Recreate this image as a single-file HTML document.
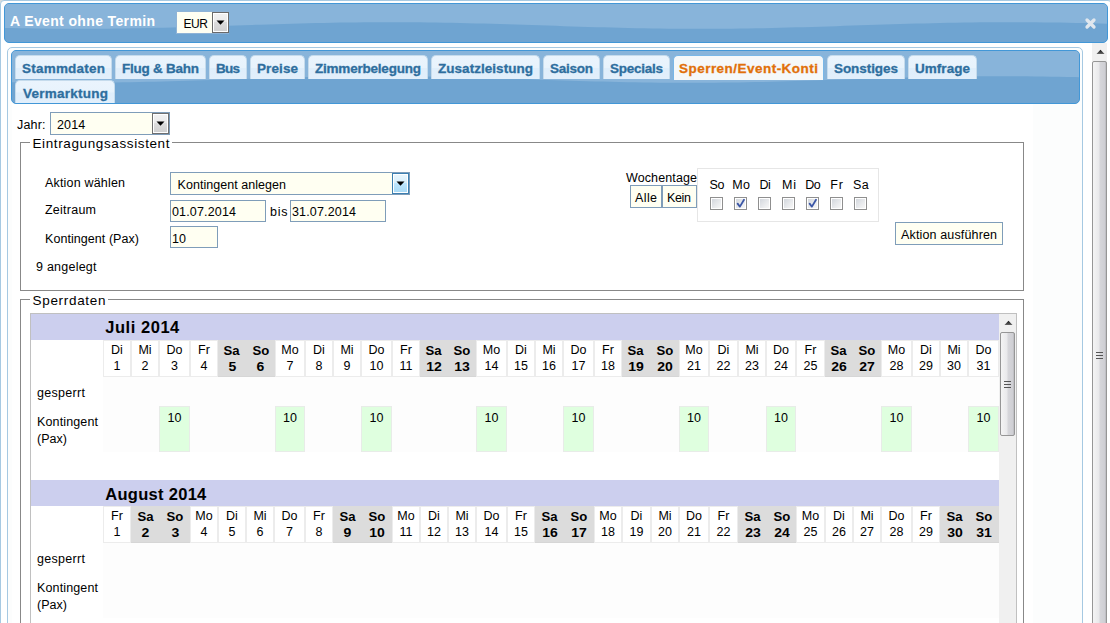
<!DOCTYPE html>
<html><head><meta charset="utf-8"><style>
html,body{margin:0;padding:0;width:1110px;height:623px;overflow:hidden;background:#dcdcdc}
body>div,body>svg,#root div,#root svg{position:absolute}
#root{position:absolute;left:0;top:0;width:1110px;height:623px;overflow:hidden}
</style></head><body><div id="root">
<div style="left:0px;top:0px;width:1110px;height:623px;background:#dcdcdc"></div>
<div style="left:0px;top:0px;width:1112px;height:660px;background:#fff;border:1px solid #a6c9e2;border-radius:4px;box-sizing:border-box"></div>
<div style="left:4px;top:3px;width:1104px;height:40px;border:1px solid #4297d7;border-radius:5px;box-sizing:border-box;overflow:hidden;background:#6fa4d1"><svg width="1104" height="40" style="position:absolute;left:-1px;top:-1px"><path d="M0 0 H1104 V20.70 L1104 20.70 L1096 20.48 L1088 20.28 L1080 20.09 L1072 19.91 L1064 19.75 L1056 19.61 L1048 19.49 L1040 19.39 L1032 19.31 L1024 19.25 L1016 19.22 L1008 19.20 L1000 19.21 L992 19.23 L984 19.28 L976 19.35 L968 19.44 L960 19.55 L952 19.68 L944 19.83 L936 20.00 L928 20.18 L920 20.38 L912 20.59 L904 20.81 L896 21.05 L888 21.29 L880 21.54 L872 21.80 L864 22.07 L856 22.33 L848 22.60 L840 22.87 L832 23.13 L824 23.39 L816 23.65 L808 23.89 L800 24.13 L792 24.36 L784 24.57 L776 24.77 L768 24.96 L760 25.13 L752 25.28 L744 25.42 L736 25.53 L728 25.63 L720 25.70 L712 25.76 L704 25.79 L696 25.80 L688 25.79 L680 25.76 L672 25.70 L664 25.63 L656 25.53 L648 25.42 L640 25.28 L632 25.13 L624 24.96 L616 24.77 L608 24.57 L600 24.36 L592 24.13 L584 23.89 L576 23.65 L568 23.39 L560 23.13 L552 22.87 L544 22.60 L536 22.33 L528 22.07 L520 21.80 L512 21.54 L504 21.29 L496 21.05 L488 20.81 L480 20.59 L472 20.38 L464 20.18 L456 20.00 L448 19.83 L440 19.68 L432 19.55 L424 19.44 L416 19.35 L408 19.28 L400 19.23 L392 19.21 L384 19.20 L376 19.22 L368 19.25 L360 19.31 L352 19.39 L344 19.49 L336 19.61 L328 19.75 L320 19.91 L312 20.09 L304 20.28 L296 20.48 L288 20.70 L280 20.93 L272 21.17 L264 21.42 L256 21.67 L248 21.93 L240 22.20 L232 22.47 L224 22.73 L216 23.00 L208 23.26 L200 23.52 L192 23.77 L184 24.01 L176 24.25 L168 24.47 L160 24.67 L152 24.87 L144 25.05 L136 25.21 L128 25.35 L120 25.48 L112 25.58 L104 25.67 L96 25.73 L88 25.78 L80 25.80 L72 25.80 L64 25.78 L56 25.73 L48 25.67 L40 25.58 L32 25.48 L24 25.35 L16 25.21 L8 25.05 L0 24.87 Z" fill="#88b4da"/></svg></div>
<div style="left:10.00px;top:14px;font:bold 14px/14px 'Liberation Sans', sans-serif;color:#fff;white-space:nowrap;letter-spacing:0.363px">A Event ohne Termin</div>
<div style="left:176px;top:11px;width:53px;height:23px;background:#fffff2;border:1px solid #8fb3d6;box-sizing:border-box"></div>
<div style="left:212px;top:12px;width:17px;height:21px;border:1px solid #6a6a6a;box-sizing:border-box;background:linear-gradient(#f2f2f2 0,#ebebeb 45%,#dcdcdc 50%,#d0d0d0 100%);box-shadow:inset 0 0 0 1px #fff"></div>
<svg style="left:216px;top:20px" width="9" height="6"><path d="M0.5 0.5 H8.5 L4.5 4.8 Z" fill="#000"/></svg>
<div style="left:183.50px;top:18px;font:normal 12px/12px 'Liberation Sans', sans-serif;color:#000;white-space:nowrap;letter-spacing:-0.422px">EUR</div>
<svg style="left:1084px;top:17px" width="13" height="13"><path d="M3 3 L10 10 M10 3 L3 10" stroke="#e0e7ee" stroke-width="3.3" stroke-linecap="round"/></svg>
<div style="left:1092px;top:43px;width:15px;height:600px;background:#f0f0f0"></div>
<svg style="left:1096px;top:49px" width="9" height="6"><defs><linearGradient id="ag" x1="0" y1="0" x2="0" y2="1"><stop offset="0" stop-color="#111"/><stop offset="1" stop-color="#666"/></linearGradient></defs><path d="M0.5 5 L4.5 0.8 L8.5 5 Z" fill="url(#ag)"/></svg>
<div style="left:1092px;top:61px;width:15px;height:600px;border:1px solid #969696;border-radius:2px;box-sizing:border-box;background:linear-gradient(90deg,#f4f4f4 0%,#e9e9eb 45%,#d6d6da 55%,#cfcfd4 90%,#b8b8bc 100%)"></div>
<div style="left:1096px;top:352px;width:7px;height:1px;background:#555"></div>
<div style="left:1096px;top:355px;width:7px;height:1px;background:#555"></div>
<div style="left:1096px;top:358px;width:7px;height:1px;background:#555"></div>
<div style="left:7px;top:47px;width:1076px;height:620px;border:1px solid #a6c9e2;border-radius:5px;box-sizing:border-box;background:#fcfdfd"></div>
<div style="left:12px;top:104px;width:1021px;height:560px;background:#fff"></div>
<div style="left:11px;top:50px;width:1069px;height:54px;border:1px solid #4297d7;border-radius:5px;box-sizing:border-box;overflow:hidden;background:#6fa4d1"><svg width="1069" height="54" style="position:absolute;left:-1px;top:-1px"><path d="M0 0 H1069 V27.23 L1069 27.23 L1064 27.11 L1056 26.93 L1048 26.77 L1040 26.63 L1032 26.51 L1024 26.41 L1016 26.32 L1008 26.26 L1000 26.22 L992 26.20 L984 26.20 L976 26.23 L968 26.27 L960 26.34 L952 26.43 L944 26.54 L936 26.66 L928 26.81 L920 26.97 L912 27.15 L904 27.35 L896 27.56 L888 27.78 L880 28.02 L872 28.26 L864 28.51 L856 28.77 L848 29.03 L840 29.30 L832 29.57 L824 29.83 L816 30.10 L808 30.36 L800 30.61 L792 30.86 L784 31.10 L776 31.33 L768 31.55 L760 31.75 L752 31.94 L744 32.11 L736 32.26 L728 32.40 L720 32.52 L712 32.62 L704 32.69 L696 32.75 L688 32.79 L680 32.80 L672 32.79 L664 32.76 L656 32.71 L648 32.64 L640 32.55 L632 32.43 L624 32.30 L616 32.15 L608 31.98 L600 31.80 L592 31.60 L584 31.39 L576 31.16 L568 30.92 L560 30.68 L552 30.42 L544 30.16 L536 29.90 L528 29.63 L520 29.37 L512 29.10 L504 28.84 L496 28.58 L488 28.32 L480 28.08 L472 27.84 L464 27.61 L456 27.40 L448 27.20 L440 27.02 L432 26.85 L424 26.70 L416 26.57 L408 26.45 L400 26.36 L392 26.29 L384 26.24 L376 26.21 L368 26.20 L360 26.21 L352 26.25 L344 26.31 L336 26.38 L328 26.48 L320 26.60 L312 26.74 L304 26.89 L296 27.06 L288 27.25 L280 27.45 L272 27.67 L264 27.90 L256 28.14 L248 28.39 L240 28.64 L232 28.90 L224 29.17 L216 29.43 L208 29.70 L200 29.97 L192 30.23 L184 30.49 L176 30.74 L168 30.98 L160 31.22 L152 31.44 L144 31.65 L136 31.85 L128 32.03 L120 32.19 L112 32.34 L104 32.46 L96 32.57 L88 32.66 L80 32.73 L72 32.77 L64 32.80 L56 32.80 L48 32.78 L40 32.74 L32 32.68 L24 32.59 L16 32.49 L8 32.37 L0 32.23 Z" fill="#88b4da"/></svg></div>
<div style="left:15px;top:55px;width:97px;height:24px;border:1px solid #c5dbec;border-bottom:0;box-sizing:border-box;border-radius:5px 5px 0 0;background:linear-gradient(#eaf4fd 0,#e8f3fc 50%,#dfeefb 54%,#e2effb 100%)"></div>
<div style="left:22.00px;top:62px;font:bold 13.5px/13.5px 'Liberation Sans', sans-serif;color:#2e6e9e;white-space:nowrap;letter-spacing:0.219px;-webkit-text-stroke:0.3px currentColor">Stammdaten</div>
<div style="left:115px;top:55px;width:91px;height:24px;border:1px solid #c5dbec;border-bottom:0;box-sizing:border-box;border-radius:5px 5px 0 0;background:linear-gradient(#eaf4fd 0,#e8f3fc 50%,#dfeefb 54%,#e2effb 100%)"></div>
<div style="left:122.00px;top:62px;font:bold 13.5px/13.5px 'Liberation Sans', sans-serif;color:#2e6e9e;white-space:nowrap;letter-spacing:-0.250px;-webkit-text-stroke:0.3px currentColor">Flug &amp; Bahn</div>
<div style="left:209px;top:55px;width:38px;height:24px;border:1px solid #c5dbec;border-bottom:0;box-sizing:border-box;border-radius:5px 5px 0 0;background:linear-gradient(#eaf4fd 0,#e8f3fc 50%,#dfeefb 54%,#e2effb 100%)"></div>
<div style="left:216.00px;top:62px;font:bold 13.5px/13.5px 'Liberation Sans', sans-serif;color:#2e6e9e;white-space:nowrap;letter-spacing:-0.758px;-webkit-text-stroke:0.3px currentColor">Bus</div>
<div style="left:250px;top:55px;width:55px;height:24px;border:1px solid #c5dbec;border-bottom:0;box-sizing:border-box;border-radius:5px 5px 0 0;background:linear-gradient(#eaf4fd 0,#e8f3fc 50%,#dfeefb 54%,#e2effb 100%)"></div>
<div style="left:257.00px;top:62px;font:bold 13.5px/13.5px 'Liberation Sans', sans-serif;color:#2e6e9e;white-space:nowrap;letter-spacing:0.091px;-webkit-text-stroke:0.3px currentColor">Preise</div>
<div style="left:308px;top:55px;width:120px;height:24px;border:1px solid #c5dbec;border-bottom:0;box-sizing:border-box;border-radius:5px 5px 0 0;background:linear-gradient(#eaf4fd 0,#e8f3fc 50%,#dfeefb 54%,#e2effb 100%)"></div>
<div style="left:315.00px;top:62px;font:bold 13.5px/13.5px 'Liberation Sans', sans-serif;color:#2e6e9e;white-space:nowrap;letter-spacing:-0.213px;-webkit-text-stroke:0.3px currentColor">Zimmerbelegung</div>
<div style="left:431px;top:55px;width:109px;height:24px;border:1px solid #c5dbec;border-bottom:0;box-sizing:border-box;border-radius:5px 5px 0 0;background:linear-gradient(#eaf4fd 0,#e8f3fc 50%,#dfeefb 54%,#e2effb 100%)"></div>
<div style="left:438.00px;top:62px;font:bold 13.5px/13.5px 'Liberation Sans', sans-serif;color:#2e6e9e;white-space:nowrap;letter-spacing:0.037px;-webkit-text-stroke:0.3px currentColor">Zusatzleistung</div>
<div style="left:543px;top:55px;width:57px;height:24px;border:1px solid #c5dbec;border-bottom:0;box-sizing:border-box;border-radius:5px 5px 0 0;background:linear-gradient(#eaf4fd 0,#e8f3fc 50%,#dfeefb 54%,#e2effb 100%)"></div>
<div style="left:550.00px;top:62px;font:bold 13.5px/13.5px 'Liberation Sans', sans-serif;color:#2e6e9e;white-space:nowrap;letter-spacing:-0.253px;-webkit-text-stroke:0.3px currentColor">Saison</div>
<div style="left:603px;top:55px;width:67px;height:24px;border:1px solid #c5dbec;border-bottom:0;box-sizing:border-box;border-radius:5px 5px 0 0;background:linear-gradient(#eaf4fd 0,#e8f3fc 50%,#dfeefb 54%,#e2effb 100%)"></div>
<div style="left:610.00px;top:62px;font:bold 13.5px/13.5px 'Liberation Sans', sans-serif;color:#2e6e9e;white-space:nowrap;letter-spacing:-0.257px;-webkit-text-stroke:0.3px currentColor">Specials</div>
<div style="left:673px;top:55px;width:151px;height:25px;border:1px solid #79b7e7;border-bottom:0;box-sizing:border-box;border-radius:5px 5px 0 0;background:#f5f8f9"></div>
<div style="left:679.00px;top:62px;font:bold 13.5px/13.5px 'Liberation Sans', sans-serif;color:#e17009;white-space:nowrap;letter-spacing:0.470px;-webkit-text-stroke:0.3px currentColor">Sperren/Event-Konti</div>
<div style="left:827px;top:55px;width:78px;height:24px;border:1px solid #c5dbec;border-bottom:0;box-sizing:border-box;border-radius:5px 5px 0 0;background:linear-gradient(#eaf4fd 0,#e8f3fc 50%,#dfeefb 54%,#e2effb 100%)"></div>
<div style="left:834.00px;top:62px;font:bold 13.5px/13.5px 'Liberation Sans', sans-serif;color:#2e6e9e;white-space:nowrap;letter-spacing:-0.064px;-webkit-text-stroke:0.3px currentColor">Sonstiges</div>
<div style="left:908px;top:55px;width:69px;height:24px;border:1px solid #c5dbec;border-bottom:0;box-sizing:border-box;border-radius:5px 5px 0 0;background:linear-gradient(#eaf4fd 0,#e8f3fc 50%,#dfeefb 54%,#e2effb 100%)"></div>
<div style="left:915.00px;top:62px;font:bold 13.5px/13.5px 'Liberation Sans', sans-serif;color:#2e6e9e;white-space:nowrap;letter-spacing:0.039px;-webkit-text-stroke:0.3px currentColor">Umfrage</div>
<div style="left:15px;top:80px;width:100px;height:23px;border:1px solid #c5dbec;border-bottom:0;box-sizing:border-box;border-radius:5px 5px 0 0;background:linear-gradient(#eaf4fd 0,#e8f3fc 50%,#dfeefb 54%,#e2effb 100%)"></div>
<div style="left:23.00px;top:87px;font:bold 13.5px/13.5px 'Liberation Sans', sans-serif;color:#2e6e9e;white-space:nowrap;letter-spacing:0.247px;-webkit-text-stroke:0.3px currentColor">Vermarktung</div>
<div style="left:17.00px;top:119px;font:normal 12.5px/12.5px 'Liberation Sans', sans-serif;color:#000;white-space:nowrap;letter-spacing:0.176px">Jahr:</div>
<div style="left:50px;top:112px;width:120px;height:23px;background:#fffff2;border:1px solid #7f9db9;box-sizing:border-box"></div>
<div style="left:152px;top:113px;width:17px;height:21px;border:1px solid #707070;box-sizing:border-box;background:linear-gradient(#f2f2f2 0,#ebebeb 45%,#dddddd 50%,#cfcfcf 100%);box-shadow:inset 0 0 0 1px #fff"></div>
<svg style="left:156px;top:121px" width="9" height="6"><path d="M0.5 0.5 H8.5 L4.5 4.8 Z" fill="#000"/></svg>
<div style="left:57.00px;top:119px;font:normal 12.5px/12.5px 'Liberation Sans', sans-serif;color:#000;white-space:nowrap;letter-spacing:0.163px">2014</div>
<div style="left:20px;top:142px;width:1px;height:149px;background:#888"></div>
<div style="left:1023px;top:142px;width:1px;height:149px;background:#888"></div>
<div style="left:20px;top:290px;width:1004px;height:1px;background:#888"></div>
<div style="left:20px;top:142px;width:10px;height:1px;background:#888"></div>
<div style="left:172px;top:142px;width:852px;height:1px;background:#888"></div>
<div style="left:32.50px;top:137px;font:normal 13.5px/13.5px 'Liberation Sans', sans-serif;color:#000;white-space:nowrap;letter-spacing:0.614px">Eintragungsassistent</div>
<div style="left:45.00px;top:177px;font:normal 12.5px/12.5px 'Liberation Sans', sans-serif;color:#000;white-space:nowrap;letter-spacing:0.181px">Aktion wählen</div>
<div style="left:170px;top:172px;width:240px;height:23px;background:#fffff2;border:1px solid #7f9db9;box-sizing:border-box"></div>
<div style="left:392px;top:173px;width:17px;height:21px;border:1px solid #3c7fb1;box-sizing:border-box;background:linear-gradient(#eaf6fd 0,#d9f0fc 45%,#bee6fd 50%,#a7d9f5 100%);box-shadow:inset 0 0 0 1px #fff"></div>
<svg style="left:396px;top:181px" width="9" height="6"><path d="M0.5 0.5 H8.5 L4.5 4.8 Z" fill="#000"/></svg>
<div style="left:177.50px;top:179px;font:normal 12.5px/12.5px 'Liberation Sans', sans-serif;color:#000;white-space:nowrap;letter-spacing:0.045px">Kontingent anlegen</div>
<div style="left:45.00px;top:204px;font:normal 12.5px/12.5px 'Liberation Sans', sans-serif;color:#000;white-space:nowrap;letter-spacing:0.239px">Zeitraum</div>
<div style="left:170px;top:200px;width:96px;height:22px;background:#fffff2;border:1px solid #7f9db9;box-sizing:border-box"></div>
<div style="left:172.00px;top:206px;font:normal 12.5px/12.5px 'Liberation Sans', sans-serif;color:#000;white-space:nowrap;letter-spacing:0.160px">01.07.2014</div>
<div style="left:270.00px;top:206px;font:normal 12.5px/12.5px 'Liberation Sans', sans-serif;color:#000;white-space:nowrap;letter-spacing:0.758px">bis</div>
<div style="left:290px;top:200px;width:96px;height:22px;background:#fffff2;border:1px solid #7f9db9;box-sizing:border-box"></div>
<div style="left:292.00px;top:206px;font:normal 12.5px/12.5px 'Liberation Sans', sans-serif;color:#000;white-space:nowrap;letter-spacing:0.160px">31.07.2014</div>
<div style="left:45.00px;top:233px;font:normal 12.5px/12.5px 'Liberation Sans', sans-serif;color:#000;white-space:nowrap;letter-spacing:0.059px">Kontingent (Pax)</div>
<div style="left:170px;top:226px;width:48px;height:22px;background:#fffff2;border:1px solid #7f9db9;box-sizing:border-box"></div>
<div style="left:172.00px;top:233px;font:normal 12.5px/12.5px 'Liberation Sans', sans-serif;color:#000;white-space:nowrap;letter-spacing:0.094px">10</div>
<div style="left:36.00px;top:261px;font:normal 12.5px/12.5px 'Liberation Sans', sans-serif;color:#000;white-space:nowrap;letter-spacing:0.234px">9 angelegt</div>
<div style="left:626.00px;top:172px;font:normal 12.5px/12.5px 'Liberation Sans', sans-serif;color:#000;white-space:nowrap;letter-spacing:0.115px">Wochentage</div>
<div style="left:630px;top:185px;width:32px;height:23px;background:#fffff2;border:1px solid #7f9db9;box-sizing:border-box"></div>
<div style="left:662px;top:185px;width:35px;height:23px;background:#fffff2;border:1px solid #7f9db9;box-sizing:border-box"></div>
<div style="left:635.00px;top:192px;font:normal 12.5px/12.5px 'Liberation Sans', sans-serif;color:#000;white-space:nowrap;letter-spacing:0.385px">Alle</div>
<div style="left:667.00px;top:192px;font:normal 12.5px/12.5px 'Liberation Sans', sans-serif;color:#000;white-space:nowrap;letter-spacing:-0.344px">Kein</div>
<div style="left:697px;top:168px;width:182px;height:54px;border:1px solid #e6e6e6;box-sizing:border-box;background:#fff"></div>
<div style="left:709.50px;top:179px;font:normal 12.5px/12.5px 'Liberation Sans', sans-serif;color:#000;white-space:nowrap;letter-spacing:-0.297px">So</div>
<div style="left:710px;top:197px;width:13px;height:13px;border:1px solid #8f8f8f;box-sizing:border-box;background:#fff"></div>
<div style="left:712px;top:199px;width:9px;height:9px;background:linear-gradient(135deg,#d3d7dd 0%,#e6e8eb 50%,#f7f7f7 100%)"></div>
<div style="left:732.30px;top:179px;font:normal 12.5px/12.5px 'Liberation Sans', sans-serif;color:#000;white-space:nowrap;letter-spacing:0.225px">Mo</div>
<div style="left:734px;top:197px;width:13px;height:13px;border:1px solid #8f8f8f;box-sizing:border-box;background:#fff"></div>
<div style="left:736px;top:199px;width:9px;height:9px;background:linear-gradient(135deg,#d3d7dd 0%,#e6e8eb 50%,#f7f7f7 100%)"></div>
<svg style="left:734px;top:197px" width="13" height="13"><path d="M3.6 6.6 L5.9 9.6 L10 2.8" stroke="#3b56a6" stroke-width="1.8" fill="none" stroke-linecap="round" stroke-linejoin="round"/></svg>
<div style="left:759.40px;top:179px;font:normal 12.5px/12.5px 'Liberation Sans', sans-serif;color:#000;white-space:nowrap;letter-spacing:-0.412px">Di</div>
<div style="left:758px;top:197px;width:13px;height:13px;border:1px solid #8f8f8f;box-sizing:border-box;background:#fff"></div>
<div style="left:760px;top:199px;width:9px;height:9px;background:linear-gradient(135deg,#d3d7dd 0%,#e6e8eb 50%,#f7f7f7 100%)"></div>
<div style="left:782.00px;top:179px;font:normal 12.5px/12.5px 'Liberation Sans', sans-serif;color:#000;white-space:nowrap;letter-spacing:0.797px">Mi</div>
<div style="left:782px;top:197px;width:13px;height:13px;border:1px solid #8f8f8f;box-sizing:border-box;background:#fff"></div>
<div style="left:784px;top:199px;width:9px;height:9px;background:linear-gradient(135deg,#d3d7dd 0%,#e6e8eb 50%,#f7f7f7 100%)"></div>
<div style="left:805.30px;top:179px;font:normal 12.5px/12.5px 'Liberation Sans', sans-serif;color:#000;white-space:nowrap;letter-spacing:-0.584px">Do</div>
<div style="left:806px;top:197px;width:13px;height:13px;border:1px solid #8f8f8f;box-sizing:border-box;background:#fff"></div>
<div style="left:808px;top:199px;width:9px;height:9px;background:linear-gradient(135deg,#d3d7dd 0%,#e6e8eb 50%,#f7f7f7 100%)"></div>
<svg style="left:806px;top:197px" width="13" height="13"><path d="M3.6 6.6 L5.9 9.6 L10 2.8" stroke="#3b56a6" stroke-width="1.8" fill="none" stroke-linecap="round" stroke-linejoin="round"/></svg>
<div style="left:830.20px;top:179px;font:normal 12.5px/12.5px 'Liberation Sans', sans-serif;color:#000;white-space:nowrap;letter-spacing:0.887px">Fr</div>
<div style="left:830px;top:197px;width:13px;height:13px;border:1px solid #8f8f8f;box-sizing:border-box;background:#fff"></div>
<div style="left:832px;top:199px;width:9px;height:9px;background:linear-gradient(135deg,#d3d7dd 0%,#e6e8eb 50%,#f7f7f7 100%)"></div>
<div style="left:853.00px;top:179px;font:normal 12.5px/12.5px 'Liberation Sans', sans-serif;color:#000;white-space:nowrap;letter-spacing:0.503px">Sa</div>
<div style="left:854px;top:197px;width:13px;height:13px;border:1px solid #8f8f8f;box-sizing:border-box;background:#fff"></div>
<div style="left:856px;top:199px;width:9px;height:9px;background:linear-gradient(135deg,#d3d7dd 0%,#e6e8eb 50%,#f7f7f7 100%)"></div>
<div style="left:895px;top:222px;width:108px;height:23px;background:#fffff2;border:1px solid #7f9db9;box-sizing:border-box"></div>
<div style="left:901.00px;top:229px;font:normal 12.5px/12.5px 'Liberation Sans', sans-serif;color:#000;white-space:nowrap;letter-spacing:0.146px">Aktion ausführen</div>
<div style="left:20px;top:299px;width:1px;height:400px;background:#888"></div>
<div style="left:1023px;top:299px;width:1px;height:400px;background:#888"></div>
<div style="left:20px;top:299px;width:10px;height:1px;background:#888"></div>
<div style="left:108px;top:299px;width:916px;height:1px;background:#888"></div>
<div style="left:32.50px;top:294px;font:normal 13.5px/13.5px 'Liberation Sans', sans-serif;color:#000;white-space:nowrap;letter-spacing:0.689px">Sperrdaten</div>
<div style="left:30px;top:313px;width:987px;height:400px;border:1px solid #c0c0c0;box-sizing:border-box;background:#fff"></div>
<div style="left:999px;top:314px;width:17px;height:400px;background:#f0f0f0"></div>
<svg style="left:1004px;top:320px" width="9" height="6"><defs><linearGradient id="ag" x1="0" y1="0" x2="0" y2="1"><stop offset="0" stop-color="#111"/><stop offset="1" stop-color="#666"/></linearGradient></defs><path d="M0.5 5 L4.5 0.8 L8.5 5 Z" fill="url(#ag)"/></svg>
<div style="left:1000px;top:332px;width:15px;height:104px;border:1px solid #969696;border-radius:2px;box-sizing:border-box;background:linear-gradient(90deg,#f4f4f4 0%,#e9e9eb 45%,#d6d6da 55%,#cfcfd4 90%,#b8b8bc 100%)"></div>
<div style="left:1004px;top:381px;width:7px;height:1px;background:#555"></div>
<div style="left:1004px;top:384px;width:7px;height:1px;background:#555"></div>
<div style="left:1004px;top:387px;width:7px;height:1px;background:#555"></div>
<div style="left:31px;top:314px;width:968px;height:26px;background:#cccfee"></div>
<div style="left:105.30px;top:319px;font:bold 16.5px/16.5px 'Liberation Sans', sans-serif;color:#000;white-space:nowrap;letter-spacing:0.535px">Juli 2014</div>
<div style="left:103px;top:377px;width:896px;height:75px;background:#fdfdfd"></div>
<div style="left:103px;top:340px;width:28px;height:37px;border:1px solid #ececec;box-sizing:border-box;background:#fff"></div>
<div style="left:111.09px;top:344px;font:normal 12.5px/12.5px 'Liberation Sans', sans-serif;color:#000;white-space:nowrap">Di</div>
<div style="left:113.52px;top:360px;font:normal 12.5px/12.5px 'Liberation Sans', sans-serif;color:#000;white-space:nowrap">1</div>
<div style="left:131px;top:340px;width:28px;height:37px;border:1px solid #ececec;box-sizing:border-box;background:#fff"></div>
<div style="left:138.40px;top:344px;font:normal 12.5px/12.5px 'Liberation Sans', sans-serif;color:#000;white-space:nowrap">Mi</div>
<div style="left:141.52px;top:360px;font:normal 12.5px/12.5px 'Liberation Sans', sans-serif;color:#000;white-space:nowrap">2</div>
<div style="left:159px;top:340px;width:31px;height:37px;border:1px solid #ececec;box-sizing:border-box;background:#fff"></div>
<div style="left:166.51px;top:344px;font:normal 12.5px/12.5px 'Liberation Sans', sans-serif;color:#000;white-space:nowrap">Do</div>
<div style="left:171.02px;top:360px;font:normal 12.5px/12.5px 'Liberation Sans', sans-serif;color:#000;white-space:nowrap">3</div>
<div style="left:159px;top:406px;width:31px;height:46px;border:1px solid #e8ece8;box-sizing:border-box;background:#dfffdf"></div>
<div style="left:167.55px;top:412px;font:normal 12.5px/12.5px 'Liberation Sans', sans-serif;color:#000;white-space:nowrap">10</div>
<div style="left:190px;top:340px;width:28px;height:37px;border:1px solid #ececec;box-sizing:border-box;background:#fff"></div>
<div style="left:198.09px;top:344px;font:normal 12.5px/12.5px 'Liberation Sans', sans-serif;color:#000;white-space:nowrap">Fr</div>
<div style="left:200.52px;top:360px;font:normal 12.5px/12.5px 'Liberation Sans', sans-serif;color:#000;white-space:nowrap">4</div>
<div style="left:218px;top:340px;width:28px;height:37px;background:#dcdcdc;box-shadow:inset 0 -1px 0 #d6d6d6"></div>
<div style="left:224.35px;top:345px;font:bold 12.5px/12.5px 'Liberation Sans', sans-serif;color:#000;white-space:nowrap;transform:scaleX(1.05);transform-origin:50% 50%">Sa</div>
<div style="left:228.52px;top:361px;font:bold 12.5px/12.5px 'Liberation Sans', sans-serif;color:#000;white-space:nowrap;transform:scaleX(1.12);transform-origin:50% 50%">5</div>
<div style="left:246px;top:340px;width:29px;height:37px;background:#dcdcdc;box-shadow:inset 0 -1px 0 #d6d6d6"></div>
<div style="left:252.51px;top:345px;font:bold 12.5px/12.5px 'Liberation Sans', sans-serif;color:#000;white-space:nowrap;transform:scaleX(1.05);transform-origin:50% 50%">So</div>
<div style="left:257.02px;top:361px;font:bold 12.5px/12.5px 'Liberation Sans', sans-serif;color:#000;white-space:nowrap;transform:scaleX(1.12);transform-origin:50% 50%">6</div>
<div style="left:275px;top:340px;width:30px;height:37px;border:1px solid #ececec;box-sizing:border-box;background:#fff"></div>
<div style="left:281.31px;top:344px;font:normal 12.5px/12.5px 'Liberation Sans', sans-serif;color:#000;white-space:nowrap">Mo</div>
<div style="left:286.52px;top:360px;font:normal 12.5px/12.5px 'Liberation Sans', sans-serif;color:#000;white-space:nowrap">7</div>
<div style="left:275px;top:406px;width:30px;height:46px;border:1px solid #e8ece8;box-sizing:border-box;background:#dfffdf"></div>
<div style="left:283.05px;top:412px;font:normal 12.5px/12.5px 'Liberation Sans', sans-serif;color:#000;white-space:nowrap">10</div>
<div style="left:305px;top:340px;width:28px;height:37px;border:1px solid #ececec;box-sizing:border-box;background:#fff"></div>
<div style="left:313.09px;top:344px;font:normal 12.5px/12.5px 'Liberation Sans', sans-serif;color:#000;white-space:nowrap">Di</div>
<div style="left:315.52px;top:360px;font:normal 12.5px/12.5px 'Liberation Sans', sans-serif;color:#000;white-space:nowrap">8</div>
<div style="left:333px;top:340px;width:28px;height:37px;border:1px solid #ececec;box-sizing:border-box;background:#fff"></div>
<div style="left:340.40px;top:344px;font:normal 12.5px/12.5px 'Liberation Sans', sans-serif;color:#000;white-space:nowrap">Mi</div>
<div style="left:343.52px;top:360px;font:normal 12.5px/12.5px 'Liberation Sans', sans-serif;color:#000;white-space:nowrap">9</div>
<div style="left:361px;top:340px;width:31px;height:37px;border:1px solid #ececec;box-sizing:border-box;background:#fff"></div>
<div style="left:368.51px;top:344px;font:normal 12.5px/12.5px 'Liberation Sans', sans-serif;color:#000;white-space:nowrap">Do</div>
<div style="left:369.55px;top:360px;font:normal 12.5px/12.5px 'Liberation Sans', sans-serif;color:#000;white-space:nowrap">10</div>
<div style="left:361px;top:406px;width:31px;height:46px;border:1px solid #e8ece8;box-sizing:border-box;background:#dfffdf"></div>
<div style="left:369.55px;top:412px;font:normal 12.5px/12.5px 'Liberation Sans', sans-serif;color:#000;white-space:nowrap">10</div>
<div style="left:392px;top:340px;width:28px;height:37px;border:1px solid #ececec;box-sizing:border-box;background:#fff"></div>
<div style="left:400.09px;top:344px;font:normal 12.5px/12.5px 'Liberation Sans', sans-serif;color:#000;white-space:nowrap">Fr</div>
<div style="left:399.51px;top:360px;font:normal 12.5px/12.5px 'Liberation Sans', sans-serif;color:#000;white-space:nowrap">11</div>
<div style="left:420px;top:340px;width:28px;height:37px;background:#dcdcdc;box-shadow:inset 0 -1px 0 #d6d6d6"></div>
<div style="left:426.35px;top:345px;font:bold 12.5px/12.5px 'Liberation Sans', sans-serif;color:#000;white-space:nowrap;transform:scaleX(1.05);transform-origin:50% 50%">Sa</div>
<div style="left:427.05px;top:361px;font:bold 12.5px/12.5px 'Liberation Sans', sans-serif;color:#000;white-space:nowrap;transform:scaleX(1.12);transform-origin:50% 50%">12</div>
<div style="left:448px;top:340px;width:28px;height:37px;background:#dcdcdc;box-shadow:inset 0 -1px 0 #d6d6d6"></div>
<div style="left:454.01px;top:345px;font:bold 12.5px/12.5px 'Liberation Sans', sans-serif;color:#000;white-space:nowrap;transform:scaleX(1.05);transform-origin:50% 50%">So</div>
<div style="left:455.05px;top:361px;font:bold 12.5px/12.5px 'Liberation Sans', sans-serif;color:#000;white-space:nowrap;transform:scaleX(1.12);transform-origin:50% 50%">13</div>
<div style="left:476px;top:340px;width:31px;height:37px;border:1px solid #ececec;box-sizing:border-box;background:#fff"></div>
<div style="left:482.81px;top:344px;font:normal 12.5px/12.5px 'Liberation Sans', sans-serif;color:#000;white-space:nowrap">Mo</div>
<div style="left:484.55px;top:360px;font:normal 12.5px/12.5px 'Liberation Sans', sans-serif;color:#000;white-space:nowrap">14</div>
<div style="left:476px;top:406px;width:31px;height:46px;border:1px solid #e8ece8;box-sizing:border-box;background:#dfffdf"></div>
<div style="left:484.55px;top:412px;font:normal 12.5px/12.5px 'Liberation Sans', sans-serif;color:#000;white-space:nowrap">10</div>
<div style="left:507px;top:340px;width:28px;height:37px;border:1px solid #ececec;box-sizing:border-box;background:#fff"></div>
<div style="left:515.09px;top:344px;font:normal 12.5px/12.5px 'Liberation Sans', sans-serif;color:#000;white-space:nowrap">Di</div>
<div style="left:514.05px;top:360px;font:normal 12.5px/12.5px 'Liberation Sans', sans-serif;color:#000;white-space:nowrap">15</div>
<div style="left:535px;top:340px;width:28px;height:37px;border:1px solid #ececec;box-sizing:border-box;background:#fff"></div>
<div style="left:542.40px;top:344px;font:normal 12.5px/12.5px 'Liberation Sans', sans-serif;color:#000;white-space:nowrap">Mi</div>
<div style="left:542.05px;top:360px;font:normal 12.5px/12.5px 'Liberation Sans', sans-serif;color:#000;white-space:nowrap">16</div>
<div style="left:563px;top:340px;width:31px;height:37px;border:1px solid #ececec;box-sizing:border-box;background:#fff"></div>
<div style="left:570.51px;top:344px;font:normal 12.5px/12.5px 'Liberation Sans', sans-serif;color:#000;white-space:nowrap">Do</div>
<div style="left:571.55px;top:360px;font:normal 12.5px/12.5px 'Liberation Sans', sans-serif;color:#000;white-space:nowrap">17</div>
<div style="left:563px;top:406px;width:31px;height:46px;border:1px solid #e8ece8;box-sizing:border-box;background:#dfffdf"></div>
<div style="left:571.55px;top:412px;font:normal 12.5px/12.5px 'Liberation Sans', sans-serif;color:#000;white-space:nowrap">10</div>
<div style="left:594px;top:340px;width:28px;height:37px;border:1px solid #ececec;box-sizing:border-box;background:#fff"></div>
<div style="left:602.09px;top:344px;font:normal 12.5px/12.5px 'Liberation Sans', sans-serif;color:#000;white-space:nowrap">Fr</div>
<div style="left:601.05px;top:360px;font:normal 12.5px/12.5px 'Liberation Sans', sans-serif;color:#000;white-space:nowrap">18</div>
<div style="left:622px;top:340px;width:28px;height:37px;background:#dcdcdc;box-shadow:inset 0 -1px 0 #d6d6d6"></div>
<div style="left:628.35px;top:345px;font:bold 12.5px/12.5px 'Liberation Sans', sans-serif;color:#000;white-space:nowrap;transform:scaleX(1.05);transform-origin:50% 50%">Sa</div>
<div style="left:629.05px;top:361px;font:bold 12.5px/12.5px 'Liberation Sans', sans-serif;color:#000;white-space:nowrap;transform:scaleX(1.12);transform-origin:50% 50%">19</div>
<div style="left:650px;top:340px;width:29px;height:37px;background:#dcdcdc;box-shadow:inset 0 -1px 0 #d6d6d6"></div>
<div style="left:656.51px;top:345px;font:bold 12.5px/12.5px 'Liberation Sans', sans-serif;color:#000;white-space:nowrap;transform:scaleX(1.05);transform-origin:50% 50%">So</div>
<div style="left:657.55px;top:361px;font:bold 12.5px/12.5px 'Liberation Sans', sans-serif;color:#000;white-space:nowrap;transform:scaleX(1.12);transform-origin:50% 50%">20</div>
<div style="left:679px;top:340px;width:30px;height:37px;border:1px solid #ececec;box-sizing:border-box;background:#fff"></div>
<div style="left:685.31px;top:344px;font:normal 12.5px/12.5px 'Liberation Sans', sans-serif;color:#000;white-space:nowrap">Mo</div>
<div style="left:687.05px;top:360px;font:normal 12.5px/12.5px 'Liberation Sans', sans-serif;color:#000;white-space:nowrap">21</div>
<div style="left:679px;top:406px;width:30px;height:46px;border:1px solid #e8ece8;box-sizing:border-box;background:#dfffdf"></div>
<div style="left:687.05px;top:412px;font:normal 12.5px/12.5px 'Liberation Sans', sans-serif;color:#000;white-space:nowrap">10</div>
<div style="left:709px;top:340px;width:29px;height:37px;border:1px solid #ececec;box-sizing:border-box;background:#fff"></div>
<div style="left:717.59px;top:344px;font:normal 12.5px/12.5px 'Liberation Sans', sans-serif;color:#000;white-space:nowrap">Di</div>
<div style="left:716.55px;top:360px;font:normal 12.5px/12.5px 'Liberation Sans', sans-serif;color:#000;white-space:nowrap">22</div>
<div style="left:738px;top:340px;width:28px;height:37px;border:1px solid #ececec;box-sizing:border-box;background:#fff"></div>
<div style="left:745.40px;top:344px;font:normal 12.5px/12.5px 'Liberation Sans', sans-serif;color:#000;white-space:nowrap">Mi</div>
<div style="left:745.05px;top:360px;font:normal 12.5px/12.5px 'Liberation Sans', sans-serif;color:#000;white-space:nowrap">23</div>
<div style="left:766px;top:340px;width:30px;height:37px;border:1px solid #ececec;box-sizing:border-box;background:#fff"></div>
<div style="left:773.01px;top:344px;font:normal 12.5px/12.5px 'Liberation Sans', sans-serif;color:#000;white-space:nowrap">Do</div>
<div style="left:774.05px;top:360px;font:normal 12.5px/12.5px 'Liberation Sans', sans-serif;color:#000;white-space:nowrap">24</div>
<div style="left:766px;top:406px;width:30px;height:46px;border:1px solid #e8ece8;box-sizing:border-box;background:#dfffdf"></div>
<div style="left:774.05px;top:412px;font:normal 12.5px/12.5px 'Liberation Sans', sans-serif;color:#000;white-space:nowrap">10</div>
<div style="left:796px;top:340px;width:29px;height:37px;border:1px solid #ececec;box-sizing:border-box;background:#fff"></div>
<div style="left:804.59px;top:344px;font:normal 12.5px/12.5px 'Liberation Sans', sans-serif;color:#000;white-space:nowrap">Fr</div>
<div style="left:803.55px;top:360px;font:normal 12.5px/12.5px 'Liberation Sans', sans-serif;color:#000;white-space:nowrap">25</div>
<div style="left:825px;top:340px;width:28px;height:37px;background:#dcdcdc;box-shadow:inset 0 -1px 0 #d6d6d6"></div>
<div style="left:831.35px;top:345px;font:bold 12.5px/12.5px 'Liberation Sans', sans-serif;color:#000;white-space:nowrap;transform:scaleX(1.05);transform-origin:50% 50%">Sa</div>
<div style="left:832.05px;top:361px;font:bold 12.5px/12.5px 'Liberation Sans', sans-serif;color:#000;white-space:nowrap;transform:scaleX(1.12);transform-origin:50% 50%">26</div>
<div style="left:853px;top:340px;width:28px;height:37px;background:#dcdcdc;box-shadow:inset 0 -1px 0 #d6d6d6"></div>
<div style="left:859.01px;top:345px;font:bold 12.5px/12.5px 'Liberation Sans', sans-serif;color:#000;white-space:nowrap;transform:scaleX(1.05);transform-origin:50% 50%">So</div>
<div style="left:860.05px;top:361px;font:bold 12.5px/12.5px 'Liberation Sans', sans-serif;color:#000;white-space:nowrap;transform:scaleX(1.12);transform-origin:50% 50%">27</div>
<div style="left:881px;top:340px;width:31px;height:37px;border:1px solid #ececec;box-sizing:border-box;background:#fff"></div>
<div style="left:887.81px;top:344px;font:normal 12.5px/12.5px 'Liberation Sans', sans-serif;color:#000;white-space:nowrap">Mo</div>
<div style="left:889.55px;top:360px;font:normal 12.5px/12.5px 'Liberation Sans', sans-serif;color:#000;white-space:nowrap">28</div>
<div style="left:881px;top:406px;width:31px;height:46px;border:1px solid #e8ece8;box-sizing:border-box;background:#dfffdf"></div>
<div style="left:889.55px;top:412px;font:normal 12.5px/12.5px 'Liberation Sans', sans-serif;color:#000;white-space:nowrap">10</div>
<div style="left:912px;top:340px;width:28px;height:37px;border:1px solid #ececec;box-sizing:border-box;background:#fff"></div>
<div style="left:920.09px;top:344px;font:normal 12.5px/12.5px 'Liberation Sans', sans-serif;color:#000;white-space:nowrap">Di</div>
<div style="left:919.05px;top:360px;font:normal 12.5px/12.5px 'Liberation Sans', sans-serif;color:#000;white-space:nowrap">29</div>
<div style="left:940px;top:340px;width:28px;height:37px;border:1px solid #ececec;box-sizing:border-box;background:#fff"></div>
<div style="left:947.40px;top:344px;font:normal 12.5px/12.5px 'Liberation Sans', sans-serif;color:#000;white-space:nowrap">Mi</div>
<div style="left:947.05px;top:360px;font:normal 12.5px/12.5px 'Liberation Sans', sans-serif;color:#000;white-space:nowrap">30</div>
<div style="left:968px;top:340px;width:31px;height:37px;border:1px solid #ececec;box-sizing:border-box;background:#fff"></div>
<div style="left:975.51px;top:344px;font:normal 12.5px/12.5px 'Liberation Sans', sans-serif;color:#000;white-space:nowrap">Do</div>
<div style="left:976.55px;top:360px;font:normal 12.5px/12.5px 'Liberation Sans', sans-serif;color:#000;white-space:nowrap">31</div>
<div style="left:968px;top:406px;width:31px;height:46px;border:1px solid #e8ece8;box-sizing:border-box;background:#dfffdf"></div>
<div style="left:976.55px;top:412px;font:normal 12.5px/12.5px 'Liberation Sans', sans-serif;color:#000;white-space:nowrap">10</div>
<div style="left:37.00px;top:387px;font:normal 12.5px/12.5px 'Liberation Sans', sans-serif;color:#000;white-space:nowrap;letter-spacing:0.306px">gesperrt</div>
<div style="left:37.00px;top:416px;font:normal 12.5px/12.5px 'Liberation Sans', sans-serif;color:#000;white-space:nowrap;letter-spacing:0.135px">Kontingent</div>
<div style="left:37.00px;top:433px;font:normal 12.5px/12.5px 'Liberation Sans', sans-serif;color:#000;white-space:nowrap;letter-spacing:0.031px">(Pax)</div>
<div style="left:31px;top:480px;width:968px;height:26px;background:#cccfee"></div>
<div style="left:105.30px;top:486px;font:bold 16.5px/16.5px 'Liberation Sans', sans-serif;color:#000;white-space:nowrap;letter-spacing:0.287px">August 2014</div>
<div style="left:103px;top:543px;width:896px;height:75px;background:#fdfdfd"></div>
<div style="left:103px;top:506px;width:28px;height:37px;border:1px solid #ececec;box-sizing:border-box;background:#fff"></div>
<div style="left:111.09px;top:510px;font:normal 12.5px/12.5px 'Liberation Sans', sans-serif;color:#000;white-space:nowrap">Fr</div>
<div style="left:113.52px;top:526px;font:normal 12.5px/12.5px 'Liberation Sans', sans-serif;color:#000;white-space:nowrap">1</div>
<div style="left:131px;top:506px;width:29px;height:37px;background:#dcdcdc;box-shadow:inset 0 -1px 0 #d6d6d6"></div>
<div style="left:137.85px;top:511px;font:bold 12.5px/12.5px 'Liberation Sans', sans-serif;color:#000;white-space:nowrap;transform:scaleX(1.05);transform-origin:50% 50%">Sa</div>
<div style="left:142.02px;top:527px;font:bold 12.5px/12.5px 'Liberation Sans', sans-serif;color:#000;white-space:nowrap;transform:scaleX(1.12);transform-origin:50% 50%">2</div>
<div style="left:160px;top:506px;width:30px;height:37px;background:#dcdcdc;box-shadow:inset 0 -1px 0 #d6d6d6"></div>
<div style="left:167.01px;top:511px;font:bold 12.5px/12.5px 'Liberation Sans', sans-serif;color:#000;white-space:nowrap;transform:scaleX(1.05);transform-origin:50% 50%">So</div>
<div style="left:171.52px;top:527px;font:bold 12.5px/12.5px 'Liberation Sans', sans-serif;color:#000;white-space:nowrap;transform:scaleX(1.12);transform-origin:50% 50%">3</div>
<div style="left:190px;top:506px;width:28px;height:37px;border:1px solid #ececec;box-sizing:border-box;background:#fff"></div>
<div style="left:195.31px;top:510px;font:normal 12.5px/12.5px 'Liberation Sans', sans-serif;color:#000;white-space:nowrap">Mo</div>
<div style="left:200.52px;top:526px;font:normal 12.5px/12.5px 'Liberation Sans', sans-serif;color:#000;white-space:nowrap">4</div>
<div style="left:218px;top:506px;width:28px;height:37px;border:1px solid #ececec;box-sizing:border-box;background:#fff"></div>
<div style="left:226.09px;top:510px;font:normal 12.5px/12.5px 'Liberation Sans', sans-serif;color:#000;white-space:nowrap">Di</div>
<div style="left:228.52px;top:526px;font:normal 12.5px/12.5px 'Liberation Sans', sans-serif;color:#000;white-space:nowrap">5</div>
<div style="left:246px;top:506px;width:28px;height:37px;border:1px solid #ececec;box-sizing:border-box;background:#fff"></div>
<div style="left:253.40px;top:510px;font:normal 12.5px/12.5px 'Liberation Sans', sans-serif;color:#000;white-space:nowrap">Mi</div>
<div style="left:256.52px;top:526px;font:normal 12.5px/12.5px 'Liberation Sans', sans-serif;color:#000;white-space:nowrap">6</div>
<div style="left:274px;top:506px;width:31px;height:37px;border:1px solid #ececec;box-sizing:border-box;background:#fff"></div>
<div style="left:281.51px;top:510px;font:normal 12.5px/12.5px 'Liberation Sans', sans-serif;color:#000;white-space:nowrap">Do</div>
<div style="left:286.02px;top:526px;font:normal 12.5px/12.5px 'Liberation Sans', sans-serif;color:#000;white-space:nowrap">7</div>
<div style="left:305px;top:506px;width:28px;height:37px;border:1px solid #ececec;box-sizing:border-box;background:#fff"></div>
<div style="left:313.09px;top:510px;font:normal 12.5px/12.5px 'Liberation Sans', sans-serif;color:#000;white-space:nowrap">Fr</div>
<div style="left:315.52px;top:526px;font:normal 12.5px/12.5px 'Liberation Sans', sans-serif;color:#000;white-space:nowrap">8</div>
<div style="left:333px;top:506px;width:29px;height:37px;background:#dcdcdc;box-shadow:inset 0 -1px 0 #d6d6d6"></div>
<div style="left:339.85px;top:511px;font:bold 12.5px/12.5px 'Liberation Sans', sans-serif;color:#000;white-space:nowrap;transform:scaleX(1.05);transform-origin:50% 50%">Sa</div>
<div style="left:344.02px;top:527px;font:bold 12.5px/12.5px 'Liberation Sans', sans-serif;color:#000;white-space:nowrap;transform:scaleX(1.12);transform-origin:50% 50%">9</div>
<div style="left:362px;top:506px;width:30px;height:37px;background:#dcdcdc;box-shadow:inset 0 -1px 0 #d6d6d6"></div>
<div style="left:369.01px;top:511px;font:bold 12.5px/12.5px 'Liberation Sans', sans-serif;color:#000;white-space:nowrap;transform:scaleX(1.05);transform-origin:50% 50%">So</div>
<div style="left:370.05px;top:527px;font:bold 12.5px/12.5px 'Liberation Sans', sans-serif;color:#000;white-space:nowrap;transform:scaleX(1.12);transform-origin:50% 50%">10</div>
<div style="left:392px;top:506px;width:28px;height:37px;border:1px solid #ececec;box-sizing:border-box;background:#fff"></div>
<div style="left:397.31px;top:510px;font:normal 12.5px/12.5px 'Liberation Sans', sans-serif;color:#000;white-space:nowrap">Mo</div>
<div style="left:399.51px;top:526px;font:normal 12.5px/12.5px 'Liberation Sans', sans-serif;color:#000;white-space:nowrap">11</div>
<div style="left:420px;top:506px;width:28px;height:37px;border:1px solid #ececec;box-sizing:border-box;background:#fff"></div>
<div style="left:428.09px;top:510px;font:normal 12.5px/12.5px 'Liberation Sans', sans-serif;color:#000;white-space:nowrap">Di</div>
<div style="left:427.05px;top:526px;font:normal 12.5px/12.5px 'Liberation Sans', sans-serif;color:#000;white-space:nowrap">12</div>
<div style="left:448px;top:506px;width:28px;height:37px;border:1px solid #ececec;box-sizing:border-box;background:#fff"></div>
<div style="left:455.40px;top:510px;font:normal 12.5px/12.5px 'Liberation Sans', sans-serif;color:#000;white-space:nowrap">Mi</div>
<div style="left:455.05px;top:526px;font:normal 12.5px/12.5px 'Liberation Sans', sans-serif;color:#000;white-space:nowrap">13</div>
<div style="left:476px;top:506px;width:31px;height:37px;border:1px solid #ececec;box-sizing:border-box;background:#fff"></div>
<div style="left:483.51px;top:510px;font:normal 12.5px/12.5px 'Liberation Sans', sans-serif;color:#000;white-space:nowrap">Do</div>
<div style="left:484.55px;top:526px;font:normal 12.5px/12.5px 'Liberation Sans', sans-serif;color:#000;white-space:nowrap">14</div>
<div style="left:507px;top:506px;width:28px;height:37px;border:1px solid #ececec;box-sizing:border-box;background:#fff"></div>
<div style="left:515.09px;top:510px;font:normal 12.5px/12.5px 'Liberation Sans', sans-serif;color:#000;white-space:nowrap">Fr</div>
<div style="left:514.05px;top:526px;font:normal 12.5px/12.5px 'Liberation Sans', sans-serif;color:#000;white-space:nowrap">15</div>
<div style="left:535px;top:506px;width:29px;height:37px;background:#dcdcdc;box-shadow:inset 0 -1px 0 #d6d6d6"></div>
<div style="left:541.85px;top:511px;font:bold 12.5px/12.5px 'Liberation Sans', sans-serif;color:#000;white-space:nowrap;transform:scaleX(1.05);transform-origin:50% 50%">Sa</div>
<div style="left:542.55px;top:527px;font:bold 12.5px/12.5px 'Liberation Sans', sans-serif;color:#000;white-space:nowrap;transform:scaleX(1.12);transform-origin:50% 50%">16</div>
<div style="left:564px;top:506px;width:30px;height:37px;background:#dcdcdc;box-shadow:inset 0 -1px 0 #d6d6d6"></div>
<div style="left:571.01px;top:511px;font:bold 12.5px/12.5px 'Liberation Sans', sans-serif;color:#000;white-space:nowrap;transform:scaleX(1.05);transform-origin:50% 50%">So</div>
<div style="left:572.05px;top:527px;font:bold 12.5px/12.5px 'Liberation Sans', sans-serif;color:#000;white-space:nowrap;transform:scaleX(1.12);transform-origin:50% 50%">17</div>
<div style="left:594px;top:506px;width:28px;height:37px;border:1px solid #ececec;box-sizing:border-box;background:#fff"></div>
<div style="left:599.31px;top:510px;font:normal 12.5px/12.5px 'Liberation Sans', sans-serif;color:#000;white-space:nowrap">Mo</div>
<div style="left:601.05px;top:526px;font:normal 12.5px/12.5px 'Liberation Sans', sans-serif;color:#000;white-space:nowrap">18</div>
<div style="left:622px;top:506px;width:29px;height:37px;border:1px solid #ececec;box-sizing:border-box;background:#fff"></div>
<div style="left:630.59px;top:510px;font:normal 12.5px/12.5px 'Liberation Sans', sans-serif;color:#000;white-space:nowrap">Di</div>
<div style="left:629.55px;top:526px;font:normal 12.5px/12.5px 'Liberation Sans', sans-serif;color:#000;white-space:nowrap">19</div>
<div style="left:651px;top:506px;width:28px;height:37px;border:1px solid #ececec;box-sizing:border-box;background:#fff"></div>
<div style="left:658.40px;top:510px;font:normal 12.5px/12.5px 'Liberation Sans', sans-serif;color:#000;white-space:nowrap">Mi</div>
<div style="left:658.05px;top:526px;font:normal 12.5px/12.5px 'Liberation Sans', sans-serif;color:#000;white-space:nowrap">20</div>
<div style="left:679px;top:506px;width:30px;height:37px;border:1px solid #ececec;box-sizing:border-box;background:#fff"></div>
<div style="left:686.01px;top:510px;font:normal 12.5px/12.5px 'Liberation Sans', sans-serif;color:#000;white-space:nowrap">Do</div>
<div style="left:687.05px;top:526px;font:normal 12.5px/12.5px 'Liberation Sans', sans-serif;color:#000;white-space:nowrap">21</div>
<div style="left:709px;top:506px;width:29px;height:37px;border:1px solid #ececec;box-sizing:border-box;background:#fff"></div>
<div style="left:717.59px;top:510px;font:normal 12.5px/12.5px 'Liberation Sans', sans-serif;color:#000;white-space:nowrap">Fr</div>
<div style="left:716.55px;top:526px;font:normal 12.5px/12.5px 'Liberation Sans', sans-serif;color:#000;white-space:nowrap">22</div>
<div style="left:738px;top:506px;width:29px;height:37px;background:#dcdcdc;box-shadow:inset 0 -1px 0 #d6d6d6"></div>
<div style="left:744.85px;top:511px;font:bold 12.5px/12.5px 'Liberation Sans', sans-serif;color:#000;white-space:nowrap;transform:scaleX(1.05);transform-origin:50% 50%">Sa</div>
<div style="left:745.55px;top:527px;font:bold 12.5px/12.5px 'Liberation Sans', sans-serif;color:#000;white-space:nowrap;transform:scaleX(1.12);transform-origin:50% 50%">23</div>
<div style="left:767px;top:506px;width:29px;height:37px;background:#dcdcdc;box-shadow:inset 0 -1px 0 #d6d6d6"></div>
<div style="left:773.51px;top:511px;font:bold 12.5px/12.5px 'Liberation Sans', sans-serif;color:#000;white-space:nowrap;transform:scaleX(1.05);transform-origin:50% 50%">So</div>
<div style="left:774.55px;top:527px;font:bold 12.5px/12.5px 'Liberation Sans', sans-serif;color:#000;white-space:nowrap;transform:scaleX(1.12);transform-origin:50% 50%">24</div>
<div style="left:796px;top:506px;width:29px;height:37px;border:1px solid #ececec;box-sizing:border-box;background:#fff"></div>
<div style="left:801.81px;top:510px;font:normal 12.5px/12.5px 'Liberation Sans', sans-serif;color:#000;white-space:nowrap">Mo</div>
<div style="left:803.55px;top:526px;font:normal 12.5px/12.5px 'Liberation Sans', sans-serif;color:#000;white-space:nowrap">25</div>
<div style="left:825px;top:506px;width:28px;height:37px;border:1px solid #ececec;box-sizing:border-box;background:#fff"></div>
<div style="left:833.09px;top:510px;font:normal 12.5px/12.5px 'Liberation Sans', sans-serif;color:#000;white-space:nowrap">Di</div>
<div style="left:832.05px;top:526px;font:normal 12.5px/12.5px 'Liberation Sans', sans-serif;color:#000;white-space:nowrap">26</div>
<div style="left:853px;top:506px;width:28px;height:37px;border:1px solid #ececec;box-sizing:border-box;background:#fff"></div>
<div style="left:860.40px;top:510px;font:normal 12.5px/12.5px 'Liberation Sans', sans-serif;color:#000;white-space:nowrap">Mi</div>
<div style="left:860.05px;top:526px;font:normal 12.5px/12.5px 'Liberation Sans', sans-serif;color:#000;white-space:nowrap">27</div>
<div style="left:881px;top:506px;width:31px;height:37px;border:1px solid #ececec;box-sizing:border-box;background:#fff"></div>
<div style="left:888.51px;top:510px;font:normal 12.5px/12.5px 'Liberation Sans', sans-serif;color:#000;white-space:nowrap">Do</div>
<div style="left:889.55px;top:526px;font:normal 12.5px/12.5px 'Liberation Sans', sans-serif;color:#000;white-space:nowrap">28</div>
<div style="left:912px;top:506px;width:28px;height:37px;border:1px solid #ececec;box-sizing:border-box;background:#fff"></div>
<div style="left:920.09px;top:510px;font:normal 12.5px/12.5px 'Liberation Sans', sans-serif;color:#000;white-space:nowrap">Fr</div>
<div style="left:919.05px;top:526px;font:normal 12.5px/12.5px 'Liberation Sans', sans-serif;color:#000;white-space:nowrap">29</div>
<div style="left:940px;top:506px;width:29px;height:37px;background:#dcdcdc;box-shadow:inset 0 -1px 0 #d6d6d6"></div>
<div style="left:946.85px;top:511px;font:bold 12.5px/12.5px 'Liberation Sans', sans-serif;color:#000;white-space:nowrap;transform:scaleX(1.05);transform-origin:50% 50%">Sa</div>
<div style="left:947.55px;top:527px;font:bold 12.5px/12.5px 'Liberation Sans', sans-serif;color:#000;white-space:nowrap;transform:scaleX(1.12);transform-origin:50% 50%">30</div>
<div style="left:969px;top:506px;width:30px;height:37px;background:#dcdcdc;box-shadow:inset 0 -1px 0 #d6d6d6"></div>
<div style="left:976.01px;top:511px;font:bold 12.5px/12.5px 'Liberation Sans', sans-serif;color:#000;white-space:nowrap;transform:scaleX(1.05);transform-origin:50% 50%">So</div>
<div style="left:977.05px;top:527px;font:bold 12.5px/12.5px 'Liberation Sans', sans-serif;color:#000;white-space:nowrap;transform:scaleX(1.12);transform-origin:50% 50%">31</div>
<div style="left:37.00px;top:553px;font:normal 12.5px/12.5px 'Liberation Sans', sans-serif;color:#000;white-space:nowrap;letter-spacing:0.306px">gesperrt</div>
<div style="left:37.00px;top:582px;font:normal 12.5px/12.5px 'Liberation Sans', sans-serif;color:#000;white-space:nowrap;letter-spacing:0.135px">Kontingent</div>
<div style="left:37.00px;top:599px;font:normal 12.5px/12.5px 'Liberation Sans', sans-serif;color:#000;white-space:nowrap;letter-spacing:0.031px">(Pax)</div>
</div></body></html>
